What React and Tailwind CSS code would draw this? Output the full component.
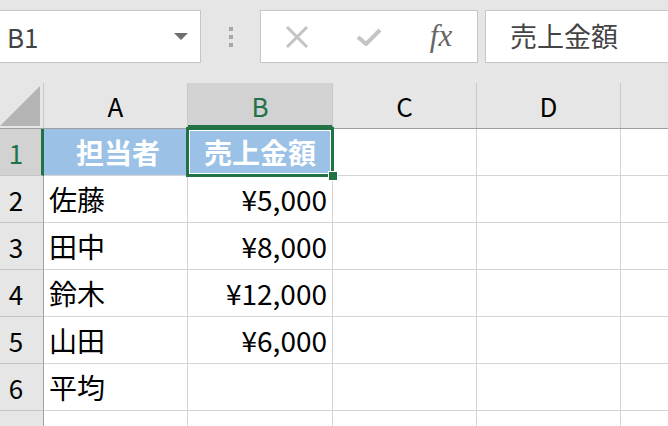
import React from "react";

const cols = [
  { key: "A", w: "w-[144px]" },
  { key: "B", w: "w-[145px]" },
  { key: "C", w: "w-[144px]" },
  { key: "D", w: "w-[144px]" },
];

const rows = [
  ["担当者", "売上金額"],
  ["佐藤", "¥5,000"],
  ["田中", "¥8,000"],
  ["鈴木", "¥12,000"],
  ["山田", "¥6,000"],
  ["平均", ""],
  ["", ""],
];

function HeaderCell({ children, w, active }) {
  return (
    <div
      className={`${w} h-full flex items-center justify-center border-r border-[#c8c8c8] text-[26px] ${
        active
          ? "bg-[#d2d2d2] text-[#217346] border-b-[3px] border-b-[#217346] pt-[3px]"
          : "text-black"
      }`}
    >
      {children}
    </div>
  );
}

export default function App() {
  return (
    <div
      className="w-[668px] h-[426px] overflow-hidden bg-white"
      style={{ fontFamily: '"Noto Sans CJK JP", "Noto Sans", sans-serif' }}
    >
      {/* formula bar */}
      <div className="h-[83px] bg-[#e6e6e6] flex items-start pt-[10px]">
        <div className="ml-[-2px] w-[203px] h-[53px] bg-white border border-[#c6c6c6] flex items-center justify-between pl-[8px] pr-[12px] shrink-0">
          <span className="text-[26px] text-[#444]">B1</span>
          <svg width="14" height="8" viewBox="0 0 14 8">
            <path d="M0 0 L14 0 L7 7 Z" fill="#6e6e6e" />
          </svg>
        </div>
        <div className="w-[59px] h-[53px] flex flex-col items-center justify-center gap-[4px] shrink-0">
          <div className="w-[4px] h-[4px] bg-[#a8a8a8]" />
          <div className="w-[4px] h-[4px] bg-[#a8a8a8]" />
          <div className="w-[4px] h-[4px] bg-[#a8a8a8]" />
        </div>
        <div className="w-[218px] h-[53px] bg-white border border-[#c6c6c6] flex items-center shrink-0">
          <div className="w-[72px] flex justify-center">
            <svg width="24" height="22" viewBox="0 0 24 22">
              <path d="M2 1 L22 21 M22 1 L2 21" stroke="#c4c4c4" strokeWidth="3" />
            </svg>
          </div>
          <div className="w-[72px] flex justify-center">
            <svg width="26" height="20" viewBox="0 0 26 20">
              <path d="M2 10 L10 17 L24 3" stroke="#c4c4c4" strokeWidth="4" fill="none" strokeLinejoin="round" />
            </svg>
          </div>
          <div
            className="w-[72px] flex justify-center text-[31px] italic text-[#666]"
            style={{ fontFamily: '"Liberation Serif", serif' }}
          >
            fx
          </div>
        </div>
        <div className="ml-[7px] flex-1 h-[53px] bg-white border border-[#c6c6c6] border-r-0 flex items-center pl-[24px] text-[27px] text-[#444]">
          売上金額
        </div>
      </div>

      {/* column headers */}
      <div className="h-[46px] flex bg-[#e6e6e6] border-b border-[#9f9f9f]">
        <div className="w-[44px] h-full border-r border-[#c8c8c8] flex items-end justify-end pr-[3px] pb-[2px]">
          <svg width="40" height="40" viewBox="0 0 40 40">
            <path d="M40 0 L40 40 L0 40 Z" fill="#b4b4b4" />
          </svg>
        </div>
        {cols.map((c) => (
          <HeaderCell key={c.key} w={c.w} active={c.key === "B"}>
            {c.key}
          </HeaderCell>
        ))}
        <div className="flex-1" />
      </div>

      {/* rows */}
      {rows.map((r, i) => {
        const first = i === 0;
        return (
          <div key={i} className="h-[47px] flex">
            <div
              className={`w-[44px] h-full border-b border-[#c6c6c6] flex items-center text-[26px] ${
                first
                  ? "bg-[#d2d2d2] text-[#217346] border-r-[3px] border-r-[#217346]"
                  : "bg-[#e6e6e6] text-black border-r border-r-[#a0a0a0]"
              }`}
            >
              <span className="w-[32px] text-center">{i + 1}</span>
            </div>
            <div
              className={`w-[144px] h-full border-r border-b border-[#d4d4d4] flex items-center pl-[5px] text-[28px] ${
                first ? "bg-[#9bc2e6] text-white font-bold justify-center" : "text-black"
              }`}
            >
              {r[0]}
            </div>
            <div
              className={`relative w-[145px] h-full border-r border-b border-[#d4d4d4] flex items-center text-[28px] ${
                first
                  ? "bg-[#9bc2e6] text-white font-bold justify-center z-10"
                  : "text-black justify-end pr-[5px]"
              }`}
            >
              {r[1]}
              {first && (
                <>
                  <div className="absolute left-[-2px] top-[-2px] right-[-2px] bottom-[-2px] border-[3px] border-[#217346]">
                    <div className="w-full h-full border border-white" />
                  </div>
                  <div className="absolute right-[-6px] bottom-[-6px] w-[10px] h-[10px] bg-[#217346] border border-white z-20" />
                </>
              )}
            </div>
            <div className="w-[144px] h-full border-r border-b border-[#d4d4d4]" />
            <div className="w-[144px] h-full border-r border-b border-[#d4d4d4]" />
            <div className="flex-1 h-full border-b border-[#d4d4d4]" />
          </div>
        );
      })}
    </div>
  );
}
